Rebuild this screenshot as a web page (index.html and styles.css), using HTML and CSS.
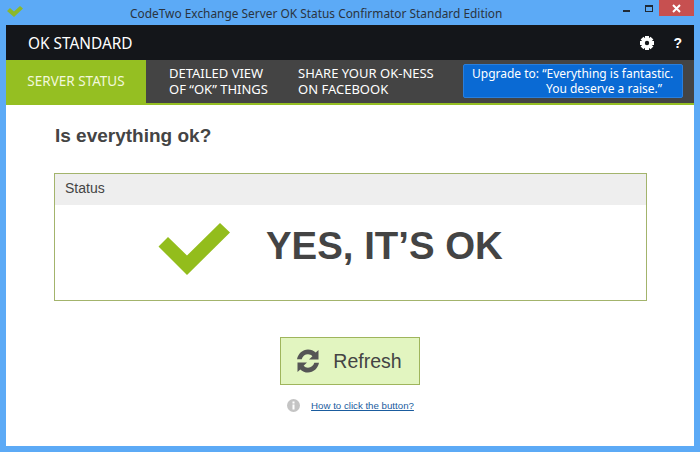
FILE: index.html
```html
<!DOCTYPE html>
<html lang="en">
<head>
<meta charset="utf-8">
<title>CodeTwo Exchange Server OK Status Confirmator Standard Edition</title>
<link rel="stylesheet" href="styles.css">
</head>
<body>
<div class="window">
  <div class="titlebar">
    <svg class="app-icon" width="20" height="16" viewBox="0 0 20 16"><path d="M1 7l3-3 4 3.500 6-5.500 3 2.500-9 8.500z" fill="#8cb82a"/></svg>
    <div class="title">CodeTwo Exchange Server OK Status Confirmator Standard Edition</div>
    <div class="controls">
      <span class="ctl-min"></span>
      <span class="ctl-max"></span>
      <span class="ctl-close">
        <svg width="9" height="9" viewBox="0 0 9 9"><path d="M1 1l7 7M8 1l-7 7" stroke="#fff" stroke-width="2"/></svg>
      </span>
    </div>
  </div>
  <div class="client">
    <header class="topbar">
      <div class="brand">OK STANDARD</div>
      <div class="top-icons">
        <svg class="gear" width="14" height="14" viewBox="0 0 14 14">
          <g fill="#fff">
            <rect x="5" y="0" width="4" height="14"/>
            <rect x="5" y="0" width="4" height="14" transform="rotate(45 7 7)"/>
            <rect x="5" y="0" width="4" height="14" transform="rotate(90 7 7)"/>
            <rect x="5" y="0" width="4" height="14" transform="rotate(135 7 7)"/>
            <circle cx="7" cy="7" r="5.200"/>
          </g>
          <circle cx="7" cy="7" r="2.200" fill="#14161a"/>
        </svg>
        <span class="help">?</span>
      </div>
    </header>
    <nav class="nav">
      <div class="tab tab-active">SERVER STATUS</div>
      <div class="tab tab-detail">DETAILED VIEW<br>OF “OK” THINGS</div>
      <div class="tab tab-share">SHARE YOUR OK-NESS<br>ON FACEBOOK</div>
      <div class="upgrade">Upgrade to: “Everything is fantastic.<br><span class="upgrade-2">You deserve a raise.”</span></div>
    </nav>
    <main class="main">
      <h1 class="question">Is everything ok?</h1>
      <section class="card">
        <div class="card-head">Status</div>
        <div class="card-body">
          <svg class="check" width="74" height="54" viewBox="0 0 74 54"><path d="M0.500 24.500L10 15l19 18.500L62 1l10 9.500L29 53z" fill="#93bd1c"/></svg>
          <div class="verdict">YES, IT’S OK</div>
        </div>
      </section>
      <div class="actions">
        <button class="refresh" type="button">
          <svg width="26" height="26" viewBox="0 0 26 26"><path fill="#555" d="M13 1.500c3 0 5.700 1.200 7.700 3.100L23.500 2v9.500H14l3.400-3.300C16.200 7 14.700 6.300 13 6.300c-3 0-5.500 2-6.300 4.900L2 11.200C3 5.800 7.500 1.500 13 1.500zM2.500 14.500H12l-3.400 3.300c1.200 1.200 2.700 1.900 4.400 1.900 3 0 5.500-2 6.300-4.900l4.700 0c-1 5.400-5.500 9.700-11 9.700-3 0-5.700-1.200-7.700-3.100L2.500 24z"/></svg>
          <span>Refresh</span>
        </button>
        <div class="help-row">
          <svg width="13" height="13" viewBox="0 0 13 13"><circle cx="6.500" cy="6.500" r="6.500" fill="#c4c4c4"/><rect x="5.500" y="5.500" width="2" height="5" fill="#fff"/><rect x="5.500" y="2.500" width="2" height="2" fill="#fff"/></svg>
          <a class="help-link" href="#">How to click the button?</a>
        </div>
      </div>
    </main>
  </div>
</div>
</body>
</html>
```
FILE: styles.css
```css
html, body {
  margin: 0;
  padding: 0;
}
.window {
  box-sizing: border-box;
  width: 700px;
  height: 452px;
  background: #5caaf6;
  display: flex;
  flex-direction: column;
  padding: 0 6px 6px;
  overflow: hidden;
}
.titlebar {
  height: 25px;
  flex: none;
  display: flex;
  align-items: flex-start;
}
.app-icon {
  flex: none;
  margin: 4px 0 0 0;
}
.title {
  margin: 5px 0 0 104px;
  font: 11.900px/16px "Noto Sans", "Open Sans", sans-serif;
  color: #2a3440;
  white-space: nowrap;
}
.controls {
  margin-left: auto;
  display: flex;
  align-items: flex-start;
}
.ctl-min {
  width: 7px;
  height: 2px;
  background: #1f2a36;
  margin: 10px 15px 0 0;
}
.ctl-max {
  box-sizing: border-box;
  width: 8px;
  height: 7px;
  border: 1px solid #1f2a36;
  border-top-width: 2px;
  margin: 5px 6px 0 0;
}
.ctl-close {
  width: 35px;
  height: 16px;
  background: #c75050;
  display: flex;
  align-items: center;
  justify-content: center;
}
.client {
  flex: 1;
  display: flex;
  flex-direction: column;
  background: #fff;
}
.topbar {
  height: 35px;
  flex: none;
  background: #14161a;
  display: flex;
  align-items: center;
  justify-content: space-between;
  padding: 0 12px 0 22px;
  box-sizing: border-box;
}
.brand {
  margin-top: 2px;
  font: 15.400px/20px "Noto Sans", "Open Sans", sans-serif;
  color: #fff;
}
.top-icons {
  display: flex;
  align-items: center;
  gap: 19px;
}
.gear {
  display: block;
}
.help {
  font: bold 14px/16px "Liberation Sans", sans-serif;
  color: #fff;
}
.nav {
  height: 43px;
  flex: none;
  background: #444;
  border-bottom: 2px solid #95bf22;
  display: flex;
  align-items: flex-start;
  color: #fff;
  font: 13px/16px "Noto Sans", "Open Sans", sans-serif;
}
.tab {
  white-space: nowrap;
  margin-top: 5px;
}
.tab-active {
  box-sizing: border-box;
  width: 140px;
  height: 45px;
  margin-top: 0;
  padding-bottom: 3px;
  background: #95bf22;
  display: flex;
  align-items: center;
  justify-content: center;
  color: #f2f8dc;
  font-size: 13.500px;
}
.tab-detail {
  margin-left: 23px;
  width: 129px;
}
.tab-share {
  width: 165px;
}
.upgrade {
  box-sizing: border-box;
  width: 220px;
  height: 34px;
  margin-top: 4px;
  background: #0a6ad4;
  border: 1px solid #2a7fdc;
  border-radius: 2px;
  padding: 1px 0 0 8px;
  white-space: nowrap;
  font-size: 12px;
  line-height: 15px;
}
.upgrade-2 {
  margin-left: 74px;
}
.main {
  flex: 1;
  display: flex;
  flex-direction: column;
  padding: 0 47px 0 48px;
}
.question {
  margin: 20px 0 0 1px;
  font: bold 19px/22px "Liberation Sans", sans-serif;
  color: #444;
}
.card {
  box-sizing: border-box;
  height: 128px;
  margin-top: 26px;
  border: 1px solid #a3b46c;
}
.card-head {
  height: 31px;
  background: #eee;
  padding-left: 10px;
  font: 14px/29px "Liberation Sans", sans-serif;
  color: #444;
}
.card-body {
  height: 95px;
  display: flex;
  align-items: center;
  padding-left: 103px;
}
.check {
  flex: none;
  display: block;
  margin-top: -8px;
}
.verdict {
  margin: -14px 0 0 34px;
  font: bold 38.400px/44px "Liberation Sans", sans-serif;
  color: #444;
  white-space: nowrap;
}
.actions {
  display: flex;
  flex-direction: column;
  align-items: center;
  margin-top: 36px;
  padding-right: 2px;
}
.refresh {
  box-sizing: border-box;
  width: 140px;
  height: 48px;
  padding: 0 2px 0 0;
  background: #e2f5c0;
  border: 1px solid #9fb55c;
  display: flex;
  align-items: center;
  justify-content: center;
  gap: 12px;
  font: 19.500px/24px "Liberation Sans", sans-serif;
  color: #444;
}
.help-row {
  display: flex;
  align-items: center;
  gap: 11px;
  margin-top: 14px;
  margin-left: 2px;
}
.help-link {
  font: 9.700px/12px "Liberation Sans", sans-serif;
  color: #1a5c9e;
}
```
